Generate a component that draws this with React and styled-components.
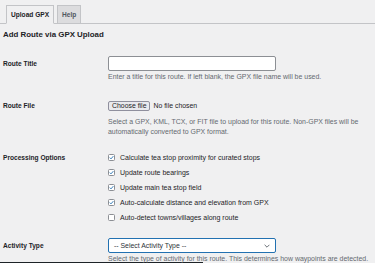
import styled, { createGlobalStyle } from 'styled-components'

const GlobalStyle = createGlobalStyle`
  html, body {
    margin: 0;
    padding: 0;
    background: #f0f0f1;
    overflow: hidden;
  }
  body {
    font-family: "Liberation Sans", Arial, sans-serif;
    color: #1d2327;
  }
`;

const options = [
  { label: 'Calculate tea stop proximity for curated stops', checked: true },
  { label: 'Update route bearings', checked: true },
  { label: 'Update main tea stop field', checked: true },
  { label: 'Auto-calculate distance and elevation from GPX', checked: true },
  { label: 'Auto-detect towns/villages along route', checked: false },
];

export default function App() {
  return (
    <Page>
      <GlobalStyle />
      <TabBar>
        <Tab active>Upload GPX</Tab>
        <Tab>Help</Tab>
      </TabBar>

      <Heading>Add Route via GPX Upload</Heading>

      <Row top={16}>
        <Label>Route Title</Label>
        <Field>
          <TextInput type="text" />
          <Help>Enter a title for this route. If left blank, the GPX file name will be used.</Help>
        </Field>
      </Row>

      <Row top={16}>
        <Label>Route File</Label>
        <Field>
          <FileLine>
            <FileButton>Choose file</FileButton>
            <span>No file chosen</span>
          </FileLine>
          <Help gap={4}>
            Select a GPX, KML, TCX, or FIT file to upload for this route. Non-GPX files will be
            <br />
            automatically converted to GPX format.
          </Help>
        </Field>
      </Row>

      <Row top={13}>
        <Label>Processing Options</Label>
        <Field>
          {options.map((opt) => (
            <CheckRow key={opt.label}>
              <Box checked={opt.checked}>
                {opt.checked && (
                  <svg width="5" height="5" viewBox="0 0 10 10">
                    <path d="M1.5 5.2 L4 7.7 L8.7 2.3" fill="none" stroke="#2271b1" strokeWidth="1.8" />
                  </svg>
                )}
              </Box>
              {opt.label}
            </CheckRow>
          ))}
        </Field>
      </Row>

      <Row top={13}>
        <Label>Activity Type</Label>
        <Field>
          <Select>
            <span>-- Select Activity Type --</span>
            <svg width="6" height="4" viewBox="0 0 10 6">
              <path d="M1 1 L5 5 L9 1" fill="none" stroke="#50575e" strokeWidth="1.4" />
            </svg>
          </Select>
          <Help gap={1}>Select the type of activity for this route. This determines how waypoints are detected.</Help>
        </Field>
      </Row>
      <BottomBar />
    </Page>
  );
}

const Page = styled.div`
  width: 375px;
  height: 263px;
  overflow: hidden;
`;

const TabBar = styled.div`
  display: flex;
  gap: 3px;
  padding: 5px 0 0 6px;
  border-bottom: 1px solid #c3c4c7;
  height: 18px;
`;

const Tab = styled.div`
  box-sizing: border-box;
  height: 19px;
  padding: 0 4px;
  display: flex;
  align-items: center;
  font-size: 6.6px;
  font-weight: 700;
  color: ${(p) => (p.active ? '#1d2327' : '#50575e')};
  background: ${(p) => (p.active ? '#f0f0f1' : '#dcdcde')};
  border: 1px solid #c3c4c7;
  border-bottom-color: ${(p) => (p.active ? '#f0f0f1' : '#c3c4c7')};
`;

const Heading = styled.h2`
  margin: 6px 0 0 3px;
  font-size: 7.9px;
  line-height: 10px;
  font-weight: 700;
`;

const Row = styled.div`
  display: grid;
  grid-template-columns: 105px 1fr;
  padding-left: 3px;
  margin-top: ${(p) => p.top}px;
`;

const Label = styled.div`
  font-size: 6.6px;
  font-weight: 700;
  line-height: 15px;
  color: #1d2327;
`;

const Field = styled.div`
  min-width: 0;
  display: flex;
  flex-direction: column;
  align-items: flex-start;
`;

const TextInput = styled.input`
  box-sizing: border-box;
  width: 168px;
  height: 15px;
  margin: 0;
  border: 1px solid #8c8f94;
  border-radius: 2px;
  background: #fff;
  outline: none;
`;

const Help = styled.p`
  margin: ${(p) => p.gap ?? 1}px 0 0;
  font-size: 6.95px;
  line-height: 10px;
  white-space: nowrap;
  color: #646970;
`;

const FileLine = styled.div`
  display: flex;
  align-items: center;
  gap: 3px;
  height: 15px;
  font-size: 6.9px;
  color: #1d2327;
`;

const FileButton = styled.div`
  box-sizing: border-box;
  height: 10px;
  padding: 0 3px;
  display: flex;
  align-items: center;
  border: 1px solid #8f8f9d;
  border-radius: 2px;
  background: #e9e9ed;
  font-size: 6.9px;
`;

const CheckRow = styled.label`
  display: flex;
  align-items: center;
  gap: 5px;
  height: 15px;
  font-size: 7px;
  color: #1d2327;
`;

const Box = styled.span`
  box-sizing: border-box;
  width: 7px;
  height: 7px;
  display: flex;
  align-items: center;
  justify-content: center;
  border: 1px solid #8c8f94;
  border-radius: 1.5px;
  background: #fff;
`;

const Select = styled.div`
  box-sizing: border-box;
  width: 168px;
  height: 15px;
  padding: 0 5px;
  display: flex;
  align-items: center;
  justify-content: space-between;
  border: 1px solid #2271b1;
  border-radius: 2px;
  background: #fff;
  font-size: 6.9px;
  color: #2c3338;
`;

const BottomBar = styled.div`
  width: 203px;
  height: 3px;
  margin-top: -2px;
  background: #1d2327;
`;
